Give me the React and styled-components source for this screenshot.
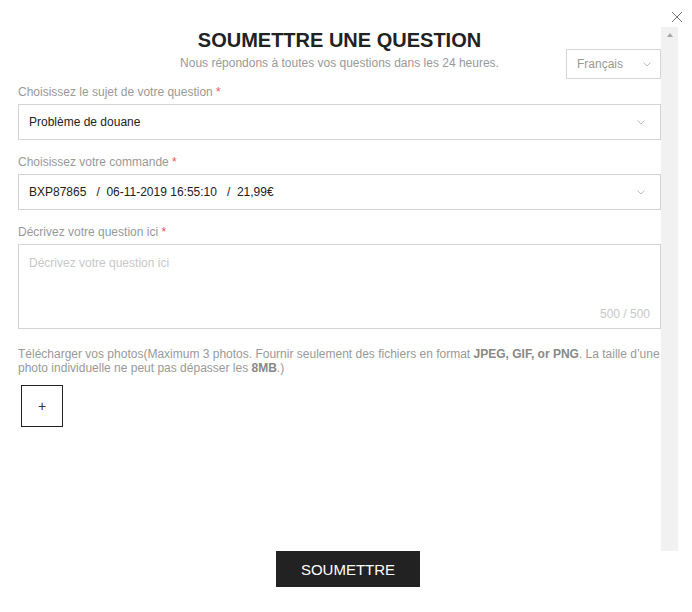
import React from "react";
import styled, { createGlobalStyle } from "styled-components";

const Global = createGlobalStyle`
  html, body { margin: 0; padding: 0; background: #fff; }
  body { font-family: "Liberation Sans", Arial, sans-serif; }
  * { box-sizing: border-box; }
`;

const Page = styled.div`
  position: relative;
  width: 692px;
  height: 612px;
  background: #fff;
  padding-top: 27px;
`;

const CloseButton = styled.button`
  position: absolute;
  top: 11px;
  right: 9px;
  width: 12px;
  height: 12px;
  padding: 0;
  border: 0;
  background: transparent;
  display: flex;
  cursor: pointer;
`;

const Body = styled.div`
  display: flex;
  height: 524px;
  padding-right: 14px;
`;

const Content = styled.div`
  flex: 1;
  padding: 1px 0 0 18px;
`;

const ScrollRail = styled.div`
  width: 17px;
  background: #f1f1f1;
  display: flex;
  justify-content: center;
  padding-top: 6px;
`;

const RailArrow = styled.div`
  width: 0;
  height: 0;
  border-left: 3.5px solid transparent;
  border-right: 3.5px solid transparent;
  border-bottom: 4px solid #a8a8a8;
`;

const Header = styled.div`
  position: relative;
  text-align: center;
  margin-bottom: 10px;
`;

const Title = styled.h1`
  margin: 0 0 2px;
  font-size: 20px;
  line-height: 24px;
  font-weight: bold;
  color: #222;
`;

const Subtitle = styled.p`
  margin: 0;
  font-size: 12px;
  line-height: 18px;
  color: #999;
`;

const LangSelect = styled.div`
  position: absolute;
  right: 0;
  top: 21px;
  width: 95px;
  height: 30px;
  border: 1px solid #d6d6d6;
  display: flex;
  align-items: center;
  justify-content: space-between;
  padding: 0 9px 0 10px;
  font-size: 12px;
  color: #999;
`;

const Field = styled.div`
  margin-bottom: 12px;
`;

const Label = styled.div`
  font-size: 12px;
  line-height: 18px;
  padding-top: 1px;
  color: #999;
  margin-bottom: 3px;
`;

const Required = styled.span`
  color: #f0505a;
`;

const SelectBox = styled.div`
  height: 36px;
  border: 1px solid #d4d4d4;
  display: flex;
  align-items: center;
  justify-content: space-between;
  padding: 0 15px 0 10px;
  font-size: 12px;
  color: #222;
`;

const SelectValue = styled.span`
  white-space: pre;
`;

const TextArea = styled.div`
  position: relative;
  height: 85px;
  border: 1px solid #d4d4d4;
  padding: 10px 10px;
  font-size: 12px;
  line-height: 16px;
  color: #c8c8c8;
`;

const Counter = styled.span`
  position: absolute;
  right: 10px;
  bottom: 6px;
  font-size: 12px;
  line-height: 16px;
  color: #c8c8c8;
`;

const UploadText = styled.p`
  margin: 18px 0 10px;
  font-size: 12px;
  line-height: 14px;
  color: #999;
`;

const Strong = styled.strong`
  color: #888;
`;

const AddPhoto = styled.button`
  margin-left: 3px;
  width: 42px;
  height: 42px;
  border: 1px solid #222;
  background: #fff;
  font-family: "Liberation Sans", Arial, sans-serif;
  font-size: 14px;
  color: #333;
  display: flex;
  align-items: center;
  justify-content: center;
  padding: 0;
`;

const Footer = styled.div`
  display: flex;
  justify-content: center;
  padding-left: 4px;
`;

const SubmitButton = styled.button`
  width: 144px;
  height: 36px;
  border: 0;
  background: #222;
  color: #fff;
  font-family: "Liberation Sans", Arial, sans-serif;
  font-size: 15px;
  padding: 0;
`;

const Chevron = () => (
  <svg width="8" height="5" viewBox="0 0 8 5">
    <polyline points="0.5,0.5 4,4 7.5,0.5" fill="none" stroke="#bdbdbd" strokeWidth="1" />
  </svg>
);

export default function App() {
  return (
    <>
      <Global />
      <Page>
        <CloseButton aria-label="Fermer">
          <svg width="12" height="12" viewBox="0 0 12 12">
            <path d="M1 1 L11 11 M11 1 L1 11" stroke="#777" strokeWidth="1" fill="none" />
          </svg>
        </CloseButton>
        <Body>
          <Content>
            <Header>
              <Title>SOUMETTRE UNE QUESTION</Title>
              <Subtitle>Nous répondons à toutes vos questions dans les 24 heures.</Subtitle>
              <LangSelect>
                <span>Français</span>
                <Chevron />
              </LangSelect>
            </Header>
            <Field>
              <Label>
                Choisissez le sujet de votre question <Required>*</Required>
              </Label>
              <SelectBox>
                <SelectValue>Problème de douane</SelectValue>
                <Chevron />
              </SelectBox>
            </Field>
            <Field>
              <Label>
                Choisissez votre commande <Required>*</Required>
              </Label>
              <SelectBox>
                <SelectValue>{"BXP87865   /  06-11-2019 16:55:10   /  21,99€"}</SelectValue>
                <Chevron />
              </SelectBox>
            </Field>
            <Field>
              <Label>
                Décrivez votre question ici <Required>*</Required>
              </Label>
              <TextArea>
                Décrivez votre question ici
                <Counter>500 / 500</Counter>
              </TextArea>
            </Field>
            <UploadText>
              {"Télécharger vos photos(Maximum 3 photos. Fournir seulement des fichiers en format "}
              <Strong>JPEG, GIF, or PNG</Strong>
              {". La taille d’une photo individuelle ne peut pas dépasser les "}
              <Strong>8MB</Strong>
              {".)"}
            </UploadText>
            <AddPhoto>+</AddPhoto>
          </Content>
          <ScrollRail>
            <RailArrow />
          </ScrollRail>
        </Body>
        <Footer>
          <SubmitButton>SOUMETTRE</SubmitButton>
        </Footer>
      </Page>
    </>
  );
}
